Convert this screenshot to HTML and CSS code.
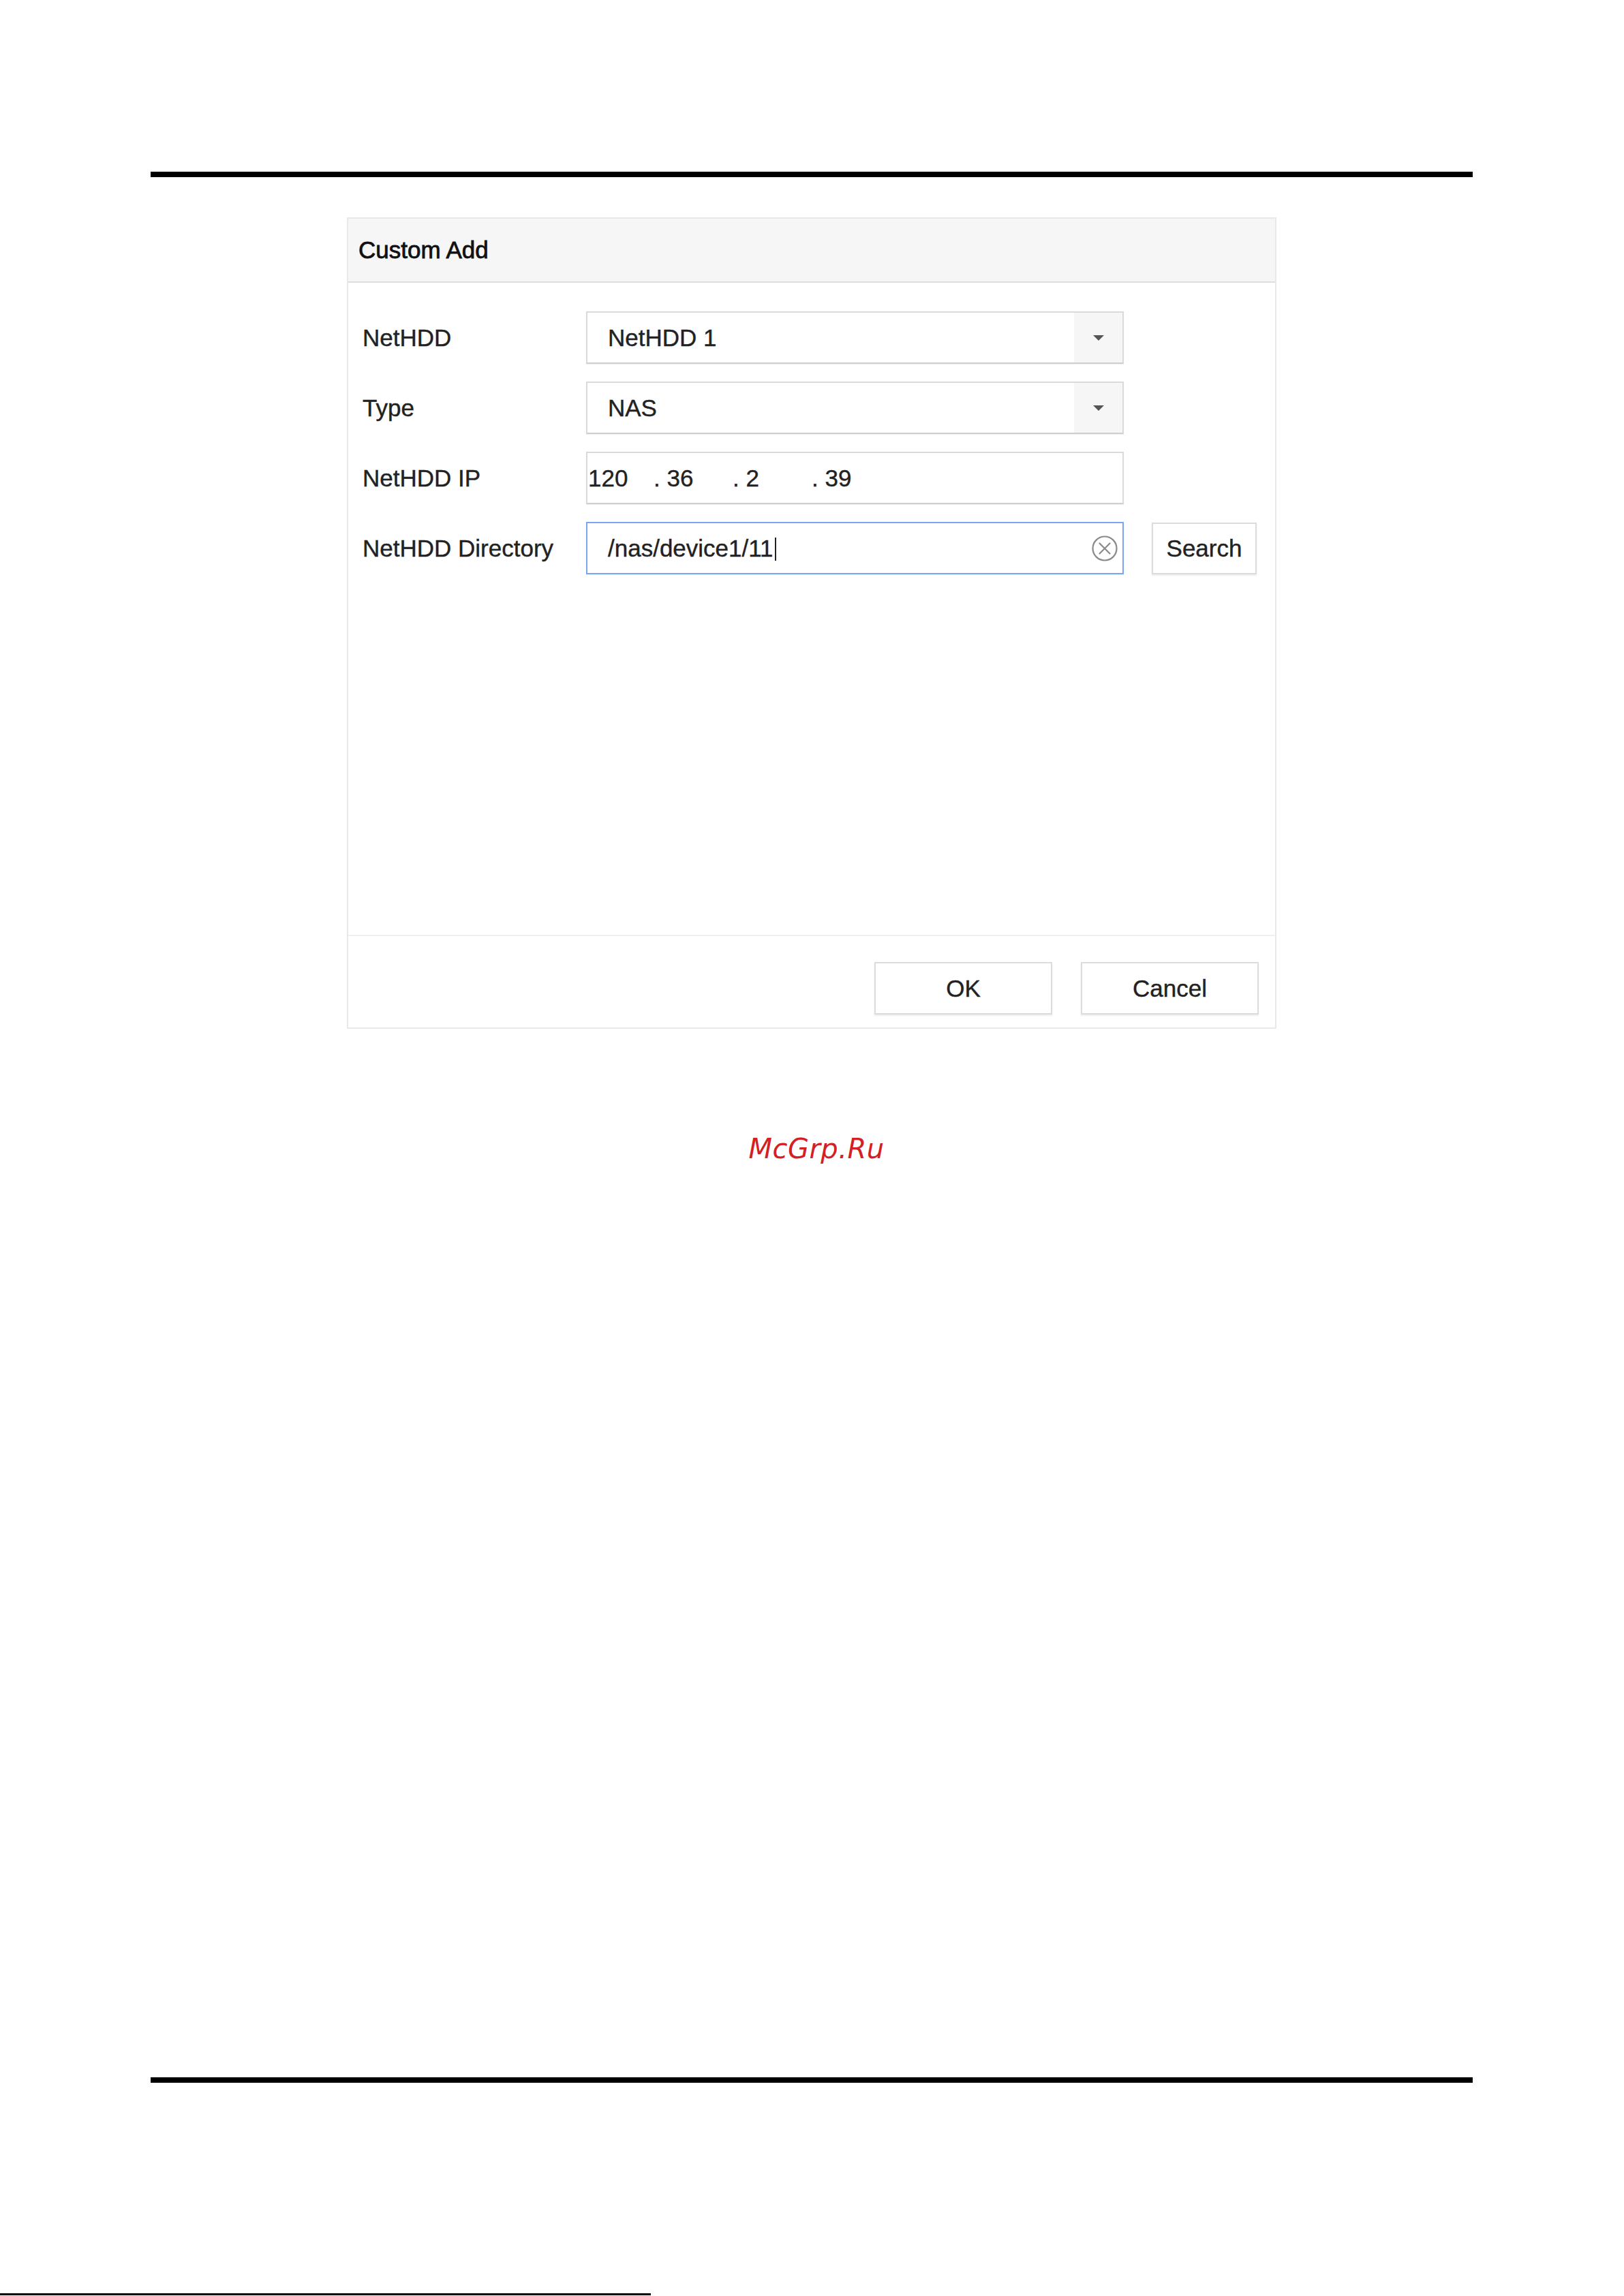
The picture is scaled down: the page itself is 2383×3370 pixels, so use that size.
FILE: index.html
```html
<!DOCTYPE html>
<html lang="en">
<head>
  <meta charset="UTF-8">
  <title>Custom Add</title>
  <link rel="stylesheet" href="styles.css">
</head>
<body>
  <div class="page">
    <div class="rule rule-top"></div>

    <div class="dialog">
      <div class="dialog-head">Custom Add</div>

      <div class="dialog-body">
        <div class="row">
          <label class="label">NetHDD</label>
          <div class="field select">
            <span class="value">NetHDD 1</span>
            <span class="arrow"><i class="caret"></i></span>
          </div>
        </div>

        <div class="row">
          <label class="label">Type</label>
          <div class="field select">
            <span class="value">NAS</span>
            <span class="arrow"><i class="caret"></i></span>
          </div>
        </div>

        <div class="row">
          <label class="label">NetHDD IP</label>
          <div class="field ip">
            <span class="ip-part first">120</span>
            <span class="ip-part">.&nbsp;36</span>
            <span class="ip-part">.&nbsp;2</span>
            <span class="ip-part">.&nbsp;39</span>
          </div>
        </div>

        <div class="row">
          <label class="label">NetHDD Directory</label>
          <div class="field focused">
            <span class="value">/nas/device1/11<span class="cursor"></span></span>
            <svg class="clear" width="40" height="40" viewBox="0 0 40 40">
              <circle cx="20" cy="20" r="17.5" fill="none" stroke="#8a8a8a" stroke-width="2.2"/>
              <path d="M12.5 12.5 L27.5 27.5 M27.5 12.5 L12.5 27.5" stroke="#8a8a8a" stroke-width="2.2" stroke-linecap="round"/>
            </svg>
          </div>
          <button class="btn search">Search</button>
        </div>
      </div>

      <div class="dialog-foot">
        <button class="btn wide">OK</button>
        <button class="btn wide">Cancel</button>
      </div>
    </div>

    <p class="watermark">McGrp.Ru</p>

    <div class="rule rule-bottom"></div>
    <div class="edge-line"></div>
  </div>
</body>
</html>
```

FILE: styles.css
```css
body {
  margin: 0;
  background: #fff;
  font-family: 'Liberation Sans', Arial, sans-serif;
  color: #222;
}
.page {
  width: 2383px;
  height: 3370px;
  overflow: hidden;
  display: flex;
  flex-direction: column;
}
.rule {
  width: 1940px;
  height: 8px;
  margin-left: 221px;
  background: #000;
  flex-shrink: 0;
}
.rule-top {
  margin-top: 252px;
}
.dialog {
  margin: 59px 0 0 509px;
  width: 1364px;
  border: 2px solid #e9e9e9;
  box-sizing: border-box;
  background: #fff;
  flex-shrink: 0;
}
.dialog-head {
  height: 92px;
  border-bottom: 2px solid #dedede;
  background: #f6f6f6;
  padding-left: 15px;
  display: flex;
  align-items: center;
  font-size: 35px;
  color: #111;
  -webkit-text-stroke: 0.8px #111;
}
.dialog-body {
  height: 957px;
  box-sizing: border-box;
  padding: 42px 0 0 21px;
  display: flex;
  flex-direction: column;
  gap: 26px;
}
.row {
  display: flex;
  align-items: center;
  height: 77px;
}
.label {
  width: 328px;
  font-size: 35px;
  color: #222;
  -webkit-text-stroke: 0.4px #222;
}
.field {
  width: 789px;
  height: 77px;
  box-sizing: border-box;
  border: 2px solid #dadada;
  border-bottom-color: #cfcfcf;
  box-shadow: 0 1px 1px rgba(0, 0, 0, 0.06);
  display: flex;
  align-items: center;
  font-size: 35px;
  color: #222;
  -webkit-text-stroke: 0.4px #222;
  background: #fff;
}
.value {
  padding-left: 30px;
  flex: 1;
  white-space: nowrap;
}
.select .arrow {
  width: 71px;
  height: 100%;
  background: #f6f6f6;
  display: flex;
  align-items: center;
  justify-content: center;
}
.caret {
  width: 0;
  height: 0;
  border-left: 8px solid transparent;
  border-right: 8px solid transparent;
  border-top: 8px solid #555;
}
.ip {
  padding-left: 1px;
}
.ip-part {
  width: 116px;
  white-space: nowrap;
}
.ip-part.first {
  width: 96px;
}
.focused {
  border-color: #7ba6ef;
}
.cursor {
  display: inline-block;
  width: 2px;
  height: 34px;
  margin-left: 2px;
  background: #222;
  vertical-align: -6px;
}
.clear {
  margin-right: 6px;
}
.btn {
  font-family: 'Liberation Sans', Arial, sans-serif;
  font-size: 35px;
  color: #222;
  -webkit-text-stroke: 0.4px #222;
  background: #fff;
  border: 2px solid #dcdcdc;
  box-shadow: 0 2px 2px rgba(0, 0, 0, 0.08);
  height: 77px;
  padding: 0;
}
.search {
  width: 154px;
  margin-left: 41px;
  height: 76px;
}
.dialog-foot {
  border-top: 2px solid #efefef;
  padding: 38px 24px 19px 0;
  display: flex;
  justify-content: flex-end;
  gap: 42px;
}
.wide {
  width: 261px;
}
.watermark {
  margin: 156px 0 0 0;
  padding-left: 13px;
  text-align: center;
  font-family: 'DejaVu Sans', sans-serif;
  font-style: oblique;
  font-size: 40px;
  line-height: 1;
  color: #d42024;
  letter-spacing: 0.5px;
}
.rule-bottom {
  margin-top: 1343px;
}
.edge-line {
  margin-top: 309px;
  width: 955px;
  height: 3px;
  background: #000;
  flex-shrink: 0;
}
```
